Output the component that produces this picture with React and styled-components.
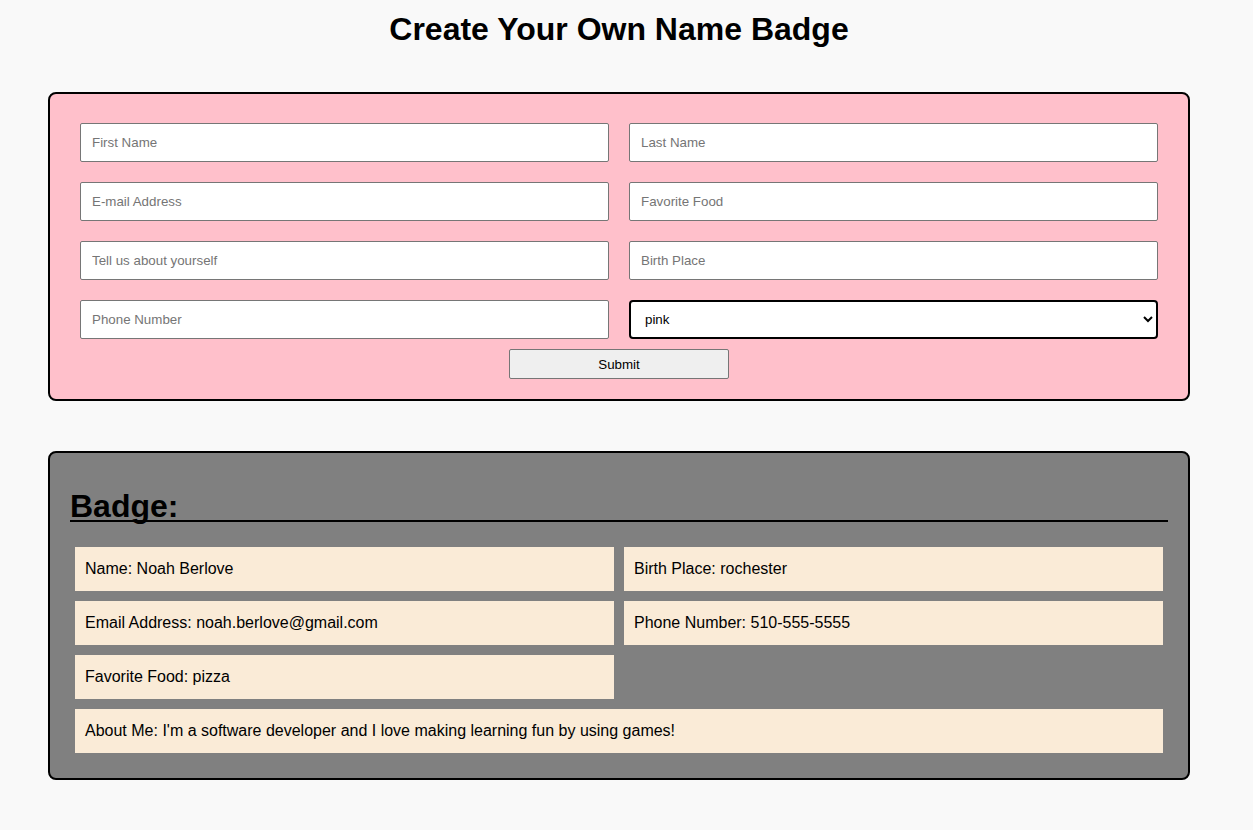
import React, { useState } from 'react'
import styled, { createGlobalStyle } from 'styled-components'

const GlobalStyle = createGlobalStyle`
  body {
    margin: 0;
    background-color: #f9f9f9;
    font-family: "Liberation Sans", Arial, sans-serif;
  }
`

const Page = styled.div`
  width: 1238px;
  padding-top: 11px;
`

const Title = styled.h1`
  margin: 0 0 44px;
  text-align: center;
  font-size: 32px;
  font-weight: bold;
  line-height: 37px;
`

const FormBox = styled.form`
  margin: 0 48px;
  padding: 29px 30px 20px;
  background-color: pink;
  border: 2px solid #000;
  border-radius: 8px;
`

const FieldGrid = styled.div`
  display: grid;
  grid-template-columns: 1fr 1fr;
  gap: 20px;
`

const TextInput = styled.input`
  box-sizing: border-box;
  height: 39px;
  padding: 0 11px;
  border: 1px solid #767676;
  border-radius: 2px;
  background: #fff;
  font-family: "Liberation Sans", Arial, sans-serif;
  font-size: 13.33px;
  &::placeholder {
    color: #757575;
  }
`

const ColorSelect = styled.select`
  box-sizing: border-box;
  height: 39px;
  padding: 0 10px;
  border: 2px solid #000;
  border-radius: 4px;
  background: #fff;
  font-family: "Liberation Sans", Arial, sans-serif;
  font-size: 13.33px;
  color: #000;
`

const SubmitRow = styled.div`
  display: flex;
  justify-content: center;
  margin-top: 10px;
`

const SubmitButton = styled.button`
  width: 220px;
  height: 30px;
  background: #efefef;
  border: 1px solid #767676;
  border-radius: 2px;
  font-family: "Liberation Sans", Arial, sans-serif;
  font-size: 13.33px;
  color: #000;
`

const BadgeBox = styled.section`
  margin: 50px 48px 0;
  padding: 38px 20px 25px;
  background-color: #808080;
  border: 2px solid #000;
  border-radius: 8px;
`

const BadgeTitle = styled.h2`
  margin: 0 0 25px;
  font-size: 32px;
  font-weight: bold;
  line-height: 30px;
  height: 29px;
  border-bottom: 2px solid #000;
`

const BadgeUnderline = styled.span`
  text-decoration: underline;
  text-decoration-thickness: 2px;
  text-underline-offset: 3px;
`

const BadgeGrid = styled.div`
  display: grid;
  grid-template-columns: 1fr 1fr;
  gap: 10px;
  padding: 0 5px;
`

const BadgeItem = styled.div`
  grid-column: ${(p) => (p.$wide ? '1 / -1' : 'auto')};
  padding: 10px;
  line-height: 24px;
  font-size: 16px;
  background-color: antiquewhite;
  color: #000;
`

const Spacer = styled.div``

const App = () => {
  const [color, setColor] = useState('pink')

  return (
    <Page>
      <GlobalStyle />
      <Title>Create Your Own Name Badge</Title>
      <FormBox onSubmit={(e) => e.preventDefault()}>
        <FieldGrid>
          <TextInput placeholder="First Name" />
          <TextInput placeholder="Last Name" />
          <TextInput placeholder="E-mail Address" />
          <TextInput placeholder="Favorite Food" />
          <TextInput placeholder="Tell us about yourself" />
          <TextInput placeholder="Birth Place" />
          <TextInput placeholder="Phone Number" />
          <ColorSelect value={color} onChange={(e) => setColor(e.target.value)}>
            <option value="pink">pink</option>
            <option value="lightblue">lightblue</option>
            <option value="lightgreen">lightgreen</option>
          </ColorSelect>
        </FieldGrid>
        <SubmitRow>
          <SubmitButton type="submit">Submit</SubmitButton>
        </SubmitRow>
      </FormBox>

      <BadgeBox>
        <BadgeTitle>
          <BadgeUnderline>Badge:</BadgeUnderline>
        </BadgeTitle>
        <BadgeGrid>
          <BadgeItem>Name: Noah Berlove</BadgeItem>
          <BadgeItem>Birth Place: rochester</BadgeItem>
          <BadgeItem>Email Address: noah.berlove@gmail.com</BadgeItem>
          <BadgeItem>Phone Number: 510-555-5555</BadgeItem>
          <BadgeItem>Favorite Food: pizza</BadgeItem>
          <Spacer />
          <BadgeItem $wide>About Me: I'm a software developer and I love making learning fun by using games!</BadgeItem>
        </BadgeGrid>
      </BadgeBox>
    </Page>
  )
}

export default App
